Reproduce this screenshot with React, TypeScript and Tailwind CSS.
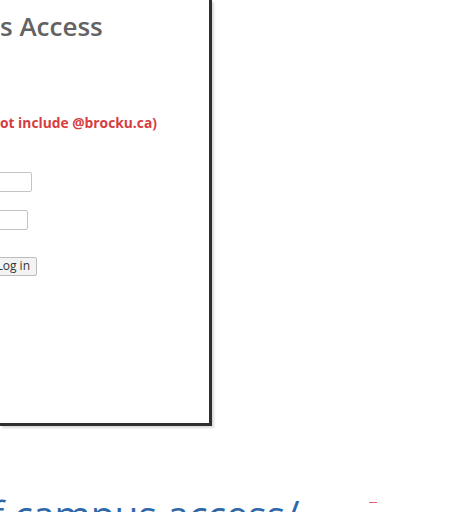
import React from 'react';

const sans = { fontFamily: '"Open Sans", "DejaVu Sans", sans-serif' };

export default function App() {
  return (
    <div className="w-[476px] h-[512px] overflow-hidden bg-white" style={sans}>
      {/* the screenshot of the login page, cut off at top and left */}
      <div className="w-[212px] h-[426px] border-r-[3px] border-b-[3px] border-[#2e2e2e] shadow-[2px_2px_2px_rgba(0,0,0,0.15)] bg-white overflow-hidden flex flex-col">
        <h1 className="mt-[13px] text-[26px] leading-none font-semibold text-[#636363] whitespace-nowrap">
          s Access
        </h1>
        <p className="mt-[77px] text-[13.8px] leading-none font-bold text-[#d63c40] whitespace-nowrap">
          ot include @brocku.ca)
        </p>
        <div className="mt-[42px] -ml-[20px] w-[52px] h-[20px] border border-[#c4c4c4] rounded-[2px] bg-white" />
        <div className="mt-[18px] -ml-[20px] w-[48px] h-[20px] border border-[#c4c4c4] rounded-[2px] bg-white" />
        <button className="mt-[27px] -ml-[12px] w-[49px] h-[19px] border border-[#bdbdbd] rounded-[2px] bg-[#f3f3f3] text-[12px] leading-none text-[#333] text-right pr-[6px] whitespace-nowrap">
          Log in
        </button>
      </div>
      <div className="relative mt-[68px] flex items-start">
        <div className="-ml-[9px] text-[39px] leading-none text-[#2f68a9] whitespace-nowrap">
          f campus access/
        </div>
        <div className="absolute left-[369px] top-[8px] w-[8px] h-[1px] bg-[#e06070]" />
      </div>
    </div>
  );
}
